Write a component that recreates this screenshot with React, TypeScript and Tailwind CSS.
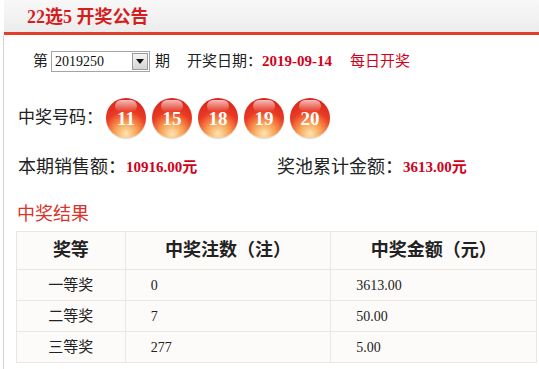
const balls = ['11', '15', '18', '19', '20'];

const rows = [
  { level: '一等奖', count: '0', amount: '3613.00' },
  { level: '二等奖', count: '7', amount: '50.00' },
  { level: '三等奖', count: '277', amount: '5.00' },
];

const font = "font-['Liberation_Serif','Noto_Sans_CJK_SC',serif]";

function Ball({ n }: { n: string }) {
  return (
    <div className="relative flex h-[40px] w-[40px] items-center justify-center rounded-full bg-[radial-gradient(circle_at_50%_90%,#fde6b4_0%,#f9a052_28%,#ea3a24_56%,#d11b18_100%)] shadow-[0_1px_1px_rgba(0,0,0,0.15)]">
      <div className="absolute left-[9px] top-[2px] h-[12px] w-[22px] rounded-full bg-[linear-gradient(to_bottom,rgba(255,255,255,0.7),rgba(255,255,255,0))]" />
      <span className="relative text-[19px] font-bold leading-none text-white">{n}</span>
    </div>
  );
}

function IssueSelect() {
  return (
    <div className="flex h-[21px] w-[99px] items-stretch border border-[#a5a5a5] bg-white">
      <span className="flex flex-1 items-center pl-[3px] text-[14px] text-[#111]">2019250</span>
      <div className="m-[1px] flex w-[16px] items-center justify-center border border-[#9a9a9a] bg-[linear-gradient(to_bottom,#f4f4f4,#d4d4d4)]">
        <svg width="8" height="5" viewBox="0 0 8 5">
          <path d="M0 0h8L4 5z" fill="#111" />
        </svg>
      </div>
    </div>
  );
}

export default function App() {
  return (
    <div className={`h-[369px] w-[539px] overflow-hidden bg-white ${font} text-[#222]`}>
      <div className="ml-[4px] flex h-[35px] items-start border-b-[3px] border-[#e23e2a] bg-[linear-gradient(to_bottom,#f8f8f8,#ececec)] pl-[23px]">
        <h1 className="mt-[6px] text-[18px] font-bold leading-[22px] text-[#d51f1f]">22选5 开奖公告</h1>
      </div>

      <div className="ml-[3px] flex h-[334px] flex-col border-l border-[#d2d2d2]">
        <div className="mt-[15px] flex h-[22px] items-center pl-[29px] text-[15px]">
          <span className="mr-[3px]">第</span>
          <IssueSelect />
          <span className="ml-[5px]">期</span>
          <span className="ml-[17px]">开奖日期：</span>
          <span className="font-bold text-[#d0021b]">2019-09-14</span>
          <span className="ml-[18px] text-[#d0021b]">每日开奖</span>
        </div>

        <div className="mt-[26px] flex h-[40px] items-center pl-[14px]">
          <span className="w-[88px] text-[17px]">中奖号码：</span>
          <div className="flex gap-[6px]">
            {balls.map((b) => (
              <Ball key={b} n={b} />
            ))}
          </div>
        </div>

        <div className="mt-[19px] flex h-[20px] items-center pl-[14px] text-[18px]">
          <div className="flex w-[259px] items-center">
            <span>本期销售额：</span>
            <span className="text-[15px] font-bold text-[#d0021b]">10916.00元</span>
          </div>
          <span>奖池累计金额：</span>
          <span className="text-[15px] font-bold text-[#d0021b]">3613.00元</span>
        </div>

        <div className="mt-[27px] flex h-[20px] items-center pl-[13px] text-[18px] text-[#d9342b]">中奖结果</div>

        <table className="ml-[12px] mt-[7px] w-[521px] border-collapse bg-[#fdfbf9] text-[15px]">
          <thead>
            <tr className="h-[38px]">
              <th className="w-[109px] border border-[#ebe6e1] text-[18px] font-bold">奖等</th>
              <th className="w-[206px] border border-[#ebe6e1] text-[18px] font-bold">中奖注数（注）</th>
              <th className="w-[206px] border border-[#ebe6e1] text-[18px] font-bold">中奖金额（元）</th>
            </tr>
          </thead>
          <tbody>
            {rows.map((r) => (
              <tr key={r.level} className="h-[31px]">
                <td className="border border-[#ebe6e1] text-center">{r.level}</td>
                <td className="border border-[#ebe6e1] pl-[25px] text-[14px]">{r.count}</td>
                <td className="border border-[#ebe6e1] pl-[25px] text-[14px]">{r.amount}</td>
              </tr>
            ))}
          </tbody>
        </table>
      </div>
    </div>
  );
}
